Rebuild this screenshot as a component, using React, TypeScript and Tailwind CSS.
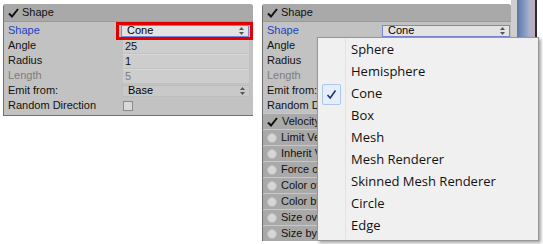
const labelFont = { fontFamily: '"Liberation Sans", Arial, sans-serif' };

function Arrows() {
  return (
    <svg width="5" height="8" viewBox="0 0 5 8" className="shrink-0">
      <path d="M2.5 0 L5 3 L0 3 Z" fill="#555" />
      <path d="M2.5 8 L5 5 L0 5 Z" fill="#555" />
    </svg>
  );
}

function Check({ className = '' }: { className?: string }) {
  return (
    <svg width="11" height="10" viewBox="0 0 11 10" className={className}>
      <path d="M1 5.5 L4 8.5 L10 1" fill="none" stroke="#111" strokeWidth="2" />
    </svg>
  );
}

function Header() {
  return (
    <div className="h-[18px] flex items-center gap-[3px] pl-[4px] bg-[#a9a9a9] border-b border-[#9a9a9a] rounded-t-[3px] text-[11px] text-[#111]">
      <Check />
      <span>Shape</span>
    </div>
  );
}

function Row({ label, color = 'text-[#111]', children }: { label: string; color?: string; children?: React.ReactNode }) {
  return (
    <div className="h-[15px] flex items-center">
      <span className={`w-[119px] shrink-0 pl-[4px] whitespace-nowrap ${color}`}>{label}</span>
      {children}
    </div>
  );
}

function Field({ value, dim = false }: { value: string; dim?: boolean }) {
  return (
    <div className={`w-[126px] h-[14px] flex items-center pl-[2px] bg-[#cdcdcd] border-t border-[#d8d8d8] ${dim ? 'text-[#7d7d7d]' : 'text-[#111]'}`}>
      {value}
    </div>
  );
}

function Select({ value, focus = false }: { value: string; focus?: boolean }) {
  return (
    <div
      className={`w-[128px] h-[12px] flex items-center justify-between pl-[5px] pr-[4px] ${
        focus ? 'bg-[#e3e3e3] border border-[#7c84d6]' : 'bg-[#c9c9c9] border border-[#bdbdbd]'
      }`}
    >
      <span>{value}</span>
      <Arrows />
    </div>
  );
}

function LeftPanel() {
  return (
    <div className="w-[250px] h-[112px] bg-[#c2c2c2] border-l border-b border-[#707070] rounded-t-[3px]" style={labelFont}>
      <Header />
      <div className="text-[11px] pt-[1px]">
        <Row label="Shape" color="text-[#1d3fc4]">
          <div className="-ml-[7px] border-[3px] border-[#e00000] pl-[2px] pr-[1px] relative">
            <Select value="Cone" focus />
          </div>
        </Row>
        <Row label="Angle">
          <Field value="25" />
        </Row>
        <Row label="Radius">
          <Field value="1" />
        </Row>
        <Row label="Length" color="text-[#7d7d7d]">
          <Field value="5" dim />
        </Row>
        <Row label="Emit from:">
          <div className="-ml-[1px]">
            <Select value="Base" />
          </div>
        </Row>
        <Row label="Random Direction">
          <div className="w-[10px] h-[10px] border border-[#8a8a8a] bg-[#d9d9d9]" />
        </Row>
      </div>
    </div>
  );
}

const modules = ['Velocity', 'Limit Velocity', 'Inherit Velocity', 'Force over', 'Color over', 'Color by', 'Size over', 'Size by'];

function RightPanel() {
  return (
    <div className="w-[249px] bg-[#c2c2c2] border-l border-[#707070] rounded-t-[3px]" style={labelFont}>
      <Header />
      <div className="text-[11px] pt-[1px]">
        <Row label="Shape" color="text-[#1d3fc4]">
          <Select value="Cone" focus />
        </Row>
        <Row label="Angle" />
        <Row label="Radius" />
        <Row label="Length" color="text-[#7d7d7d]" />
        <Row label="Emit from:" />
        <Row label="Random Direction" />
      </div>
      <div className="flex flex-col text-[11px]">
        {modules.map((m, i) => (
          <div
            key={m}
            className="h-[16px] flex items-center gap-[4px] pl-[4px] bg-[#a9a9a9] border-t border-[#c8c8c8] rounded-t-[2px] text-[#111] whitespace-nowrap"
          >
            {i === 0 ? (
              <Check />
            ) : (
              <span className="w-[10px] h-[10px] rounded-full bg-[#d6d6d6] border border-[#bcbcbc] shrink-0" />
            )}
            <span>{m}</span>
          </div>
        ))}
      </div>
    </div>
  );
}

const items = ['Sphere', 'Hemisphere', 'Cone', 'Box', 'Mesh', 'Mesh Renderer', 'Skinned Mesh Renderer', 'Circle', 'Edge'];

function Popup() {
  return (
    <div
      className="absolute left-[317px] top-[37px] w-[222px] h-[204px] bg-[#f0f0f0] border border-[#979797] shadow-[2px_2px_3px_rgba(0,0,0,0.35)] flex"
      style={{ fontFamily: '"Open Sans", "Noto Sans", sans-serif' }}
    >
      <div className="w-[28px] shrink-0 border-r border-[#e2e2e2]" />
      <div className="flex flex-col pt-[1px] text-[13px] text-[#111]">
        {items.map((it) => (
          <div key={it} className="h-[22px] flex items-center pl-[5px] relative">
            {it === 'Cone' && (
              <div className="absolute -left-[24px] top-[1px] w-[19px] h-[21px] rounded-[2px] border border-[#a9c8f0] bg-[#e6eefa] flex items-center justify-center">
                <svg width="11" height="11" viewBox="0 0 11 11">
                  <path d="M1.5 6 L4.2 9 L9.5 1.5" fill="none" stroke="#1f2f80" strokeWidth="1.6" />
                </svg>
              </div>
            )}
            {it}
          </div>
        ))}
      </div>
    </div>
  );
}

export default function App() {
  return (
    <div className="w-[543px] h-[244px] bg-white relative overflow-hidden">
      <div className="flex pt-[4px] pl-[3px]">
        <LeftPanel />
        <div className="ml-[9px] flex">
          <RightPanel />
          <div className="w-[6px] h-[240px] bg-[#cfcfcf] mt-[-4px]" />
          <div className="w-[13px] h-[240px] bg-gradient-to-r from-[#5b76a8] to-[#a6b6d4] mt-[-4px]" />
          <div className="w-[5px] h-[240px] bg-[#b8aec0] mt-[-4px]" />
          <div className="w-[2px] h-[240px] bg-[#2b2b2b] mt-[-4px]" />
        </div>
      </div>
      <Popup />
    </div>
  );
}
